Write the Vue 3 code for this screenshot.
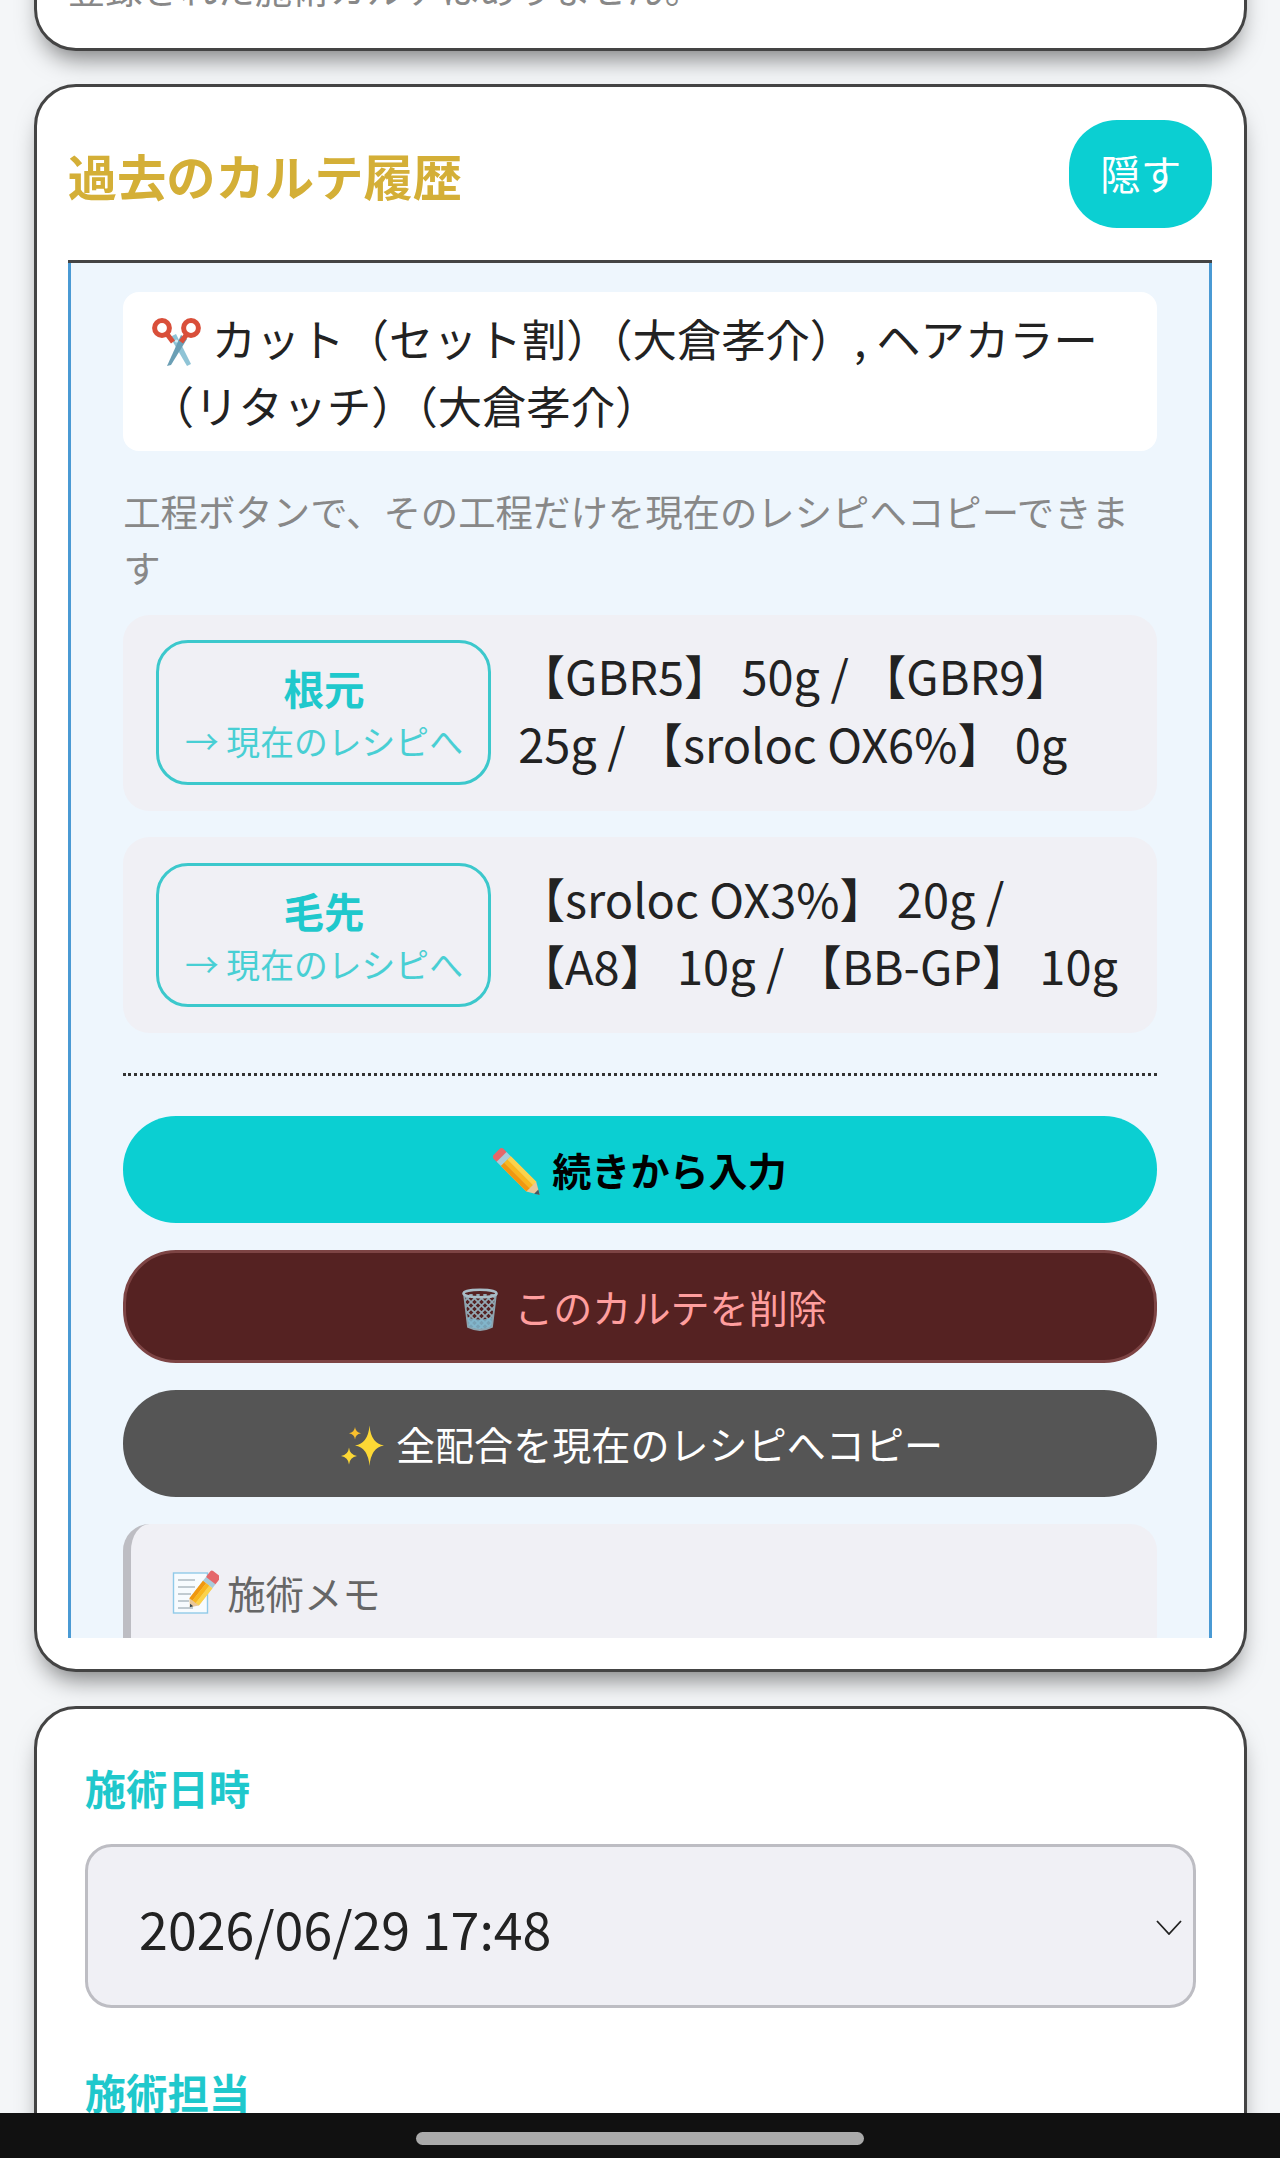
<script setup>
const rows = [
  { label: '根元', text: '【GBR5】 50g / 【GBR9】 25g / 【sroloc OX6%】 0g' },
  { label: '毛先', text: '【sroloc OX3%】 20g / 【A8】 10g / 【BB-GP】 10g' },
]
</script>

<template>
  <div class="screen">
    <main class="scroll">
      <section class="card card-empty">
        <p class="empty-text">登録された施術カルテはありません。</p>
      </section>

      <section class="card card-history">
        <header class="history-head">
          <h2 class="history-title">過去のカルテ履歴</h2>
          <button class="hide-btn">隠す</button>
        </header>

        <div class="history-list">
          <article class="entry">
            <div class="menu-box">
              <svg class="emoji emoji-menu" viewBox="10 10 52 52">
                <polygon points="30,31 36,28 51,58 47,60" fill="#8fc4d6" />
                <polygon points="41,29 47,33 31,59 27,60" fill="#6b9fb5" />
                <circle cx="36.500" cy="35" r="1.600" fill="#d5eef6" />
                <path d="M27 28 L33 36 M47 28 L41 36" stroke="#d94f3a" stroke-width="5" />
                <circle cx="22" cy="22" r="7.400" fill="none" stroke="#d94f3a" stroke-width="5" />
                <circle cx="51" cy="22" r="7.400" fill="none" stroke="#d94f3a" stroke-width="5" />
              </svg>
              カット（セット割）（大倉孝介）, ヘアカラー（リタッチ）（大倉孝介）
            </div>
            <p class="hint">工程ボタンで、その工程だけを現在のレシピへコピーできます</p>

            <div v-for="row in rows" :key="row.label" class="step-row">
              <button class="step-btn">
                <span class="step-name">{{ row.label }}</span>
                <span class="step-sub">→ 現在のレシピへ</span>
              </button>
              <div class="step-text">{{ row.text }}</div>
            </div>

            <div class="dotted"></div>

            <button class="action action-continue">
              <svg class="emoji" viewBox="8 2.700 52 52">
                <g transform="rotate(45 18 17)">
                  <rect x="9" y="10" width="10" height="14" rx="3" fill="#e5676a" />
                  <rect x="16" y="10" width="6" height="14" fill="#a9ccdb" />
                  <polygon points="22,10 58,10 70,17 58,24 22,24" fill="#e8c79a" />
                  <rect x="22" y="10" width="36" height="4.700" fill="#fbd34b" />
                  <rect x="22" y="14.700" width="36" height="4.600" fill="#f9b71e" />
                  <rect x="22" y="19.300" width="36" height="4.700" fill="#f0980f" />
                  <polygon points="65,14 70,17 65,20" fill="#455a64" />
                </g>
              </svg>
              <span class="action-label">続きから入力</span>
            </button>

            <button class="action action-delete">
              <svg class="emoji" viewBox="3 0 52 52">
                <defs>
                  <pattern id="mesh" width="7" height="7" patternUnits="userSpaceOnUse">
                    <path d="M0 0 L7 7 M7 0 L0 7" stroke="#93a9b4" stroke-width="1.700" />
                  </pattern>
                </defs>
                <path d="M14 13 L18 46 Q30 52 42 46 L46 13 Z" fill="url(#mesh)" />
                <path d="M16.500 36 Q30 41 43.500 36 L42 46 Q30 52 18 46 Z" fill="#7fb9d0" opacity=".85" />
                <path d="M14 13 L18 46 Q30 52 42 46 L46 13" fill="none" stroke="#8da3ae" stroke-width="1.800" />
                <ellipse cx="30" cy="12.500" rx="16.500" ry="3.800" fill="none" stroke="#a9bdc7" stroke-width="2.600" />
              </svg>
              <span class="action-label">このカルテを削除</span>
            </button>

            <button class="action action-copy">
              <svg class="emoji" viewBox="7 2 52 52">
                <path d="M39.500 9.500 Q41 27.500 54 29.500 Q41 31.500 39.500 50 Q38 31.500 25 29.500 Q38 27.500 39.500 9.500Z" fill="#fdd835" />
                <path d="M25 11 Q25.600 16.400 31 17.300 Q25.600 18 25 23.500 Q24.400 18 19 17.300 Q24.400 16.400 25 11Z" fill="#f9bf2d" />
                <path d="M19 31.500 Q19.800 39 27 40 Q19.800 41 19 48.500 Q18.200 41 11 40 Q18.200 39 19 31.500Z" fill="#fdd835" />
              </svg>
              <span class="action-label">全配合を現在のレシピへコピー</span>
            </button>

            <div class="memo">
              <svg class="emoji-memo" viewBox="6 4 48 48">
                <rect x="8.500" y="8" width="34" height="40" fill="#f7fbfe" stroke="#90cae9" stroke-width="1.400" />
                <path d="M13 15 H30 M13 22 H30 M13 29 H26 M13 36 H24 M13 43 H28" stroke="#8a9aa3" stroke-width="1" />
                <g transform="rotate(-52 47 14)">
                  <rect x="44" y="8" width="10" height="12" rx="2" fill="#e5676a" />
                  <rect x="40" y="8" width="5" height="12" fill="#a9ccdb" />
                  <polygon points="40,8 18,8 11,14 18,20 40,20" fill="#e8c79a" />
                  <rect x="18" y="8" width="22" height="4" fill="#f0980f" />
                  <rect x="18" y="12" width="22" height="4" fill="#f9b71e" />
                  <rect x="18" y="16" width="22" height="4" fill="#fbd34b" />
                  <polygon points="14,12 11,14 14,16" fill="#37474f" />
                </g>
              </svg>
              <span>施術メモ</span>
            </div>
          </article>
        </div>
      </section>

      <section class="card card-form">
        <label class="field-label">施術日時</label>
        <div class="select-wrap">
          <select class="select">
            <option>2026/06/29 17:48</option>
          </select>
          <svg class="chevron" viewBox="0 0 26 15">
            <path d="M1 1 L13 14 L25 1" fill="none" stroke="#222" stroke-width="1.800" />
          </svg>
        </div>
        <label class="field-label field-next">施術担当</label>
      </section>
    </main>

    <footer class="navbar"><span class="handle"></span></footer>
  </div>
</template>

<style scoped>
.screen {
  height: 2158px;
  display: flex;
  flex-direction: column;
  overflow: hidden;
  background: #f4f6f8;
  font-family: "Noto Sans CJK JP", "Noto Sans", sans-serif;
  color: #222;
}
.scroll {
  flex: 1;
  min-height: 0;
  overflow: hidden;
  padding: 0 33px 0 34px;
}
.card {
  box-sizing: border-box;
  background: #fff;
  border: 3px solid #444;
  border-radius: 42px;
  box-shadow: 0 15px 24px -8px rgba(0, 0, 0, 0.5);
}
.card-empty {
  margin-top: -75px;
  padding: 32px 30.700px;
}
.empty-text {
  margin: 0;
  font-size: 37.400px;
  line-height: 56px;
  color: #888;
}
.card-history {
  margin-top: 33px;
  height: 1587.700px;
  padding: 33px 31.700px 0 30.700px;
}
.history-head {
  display: flex;
  align-items: center;
  justify-content: space-between;
  height: 108px;
  margin-bottom: 32px;
}
.history-title {
  margin: 0;
  font-size: 49.300px;
  font-weight: 700;
  color: #d4af37;
}
.hide-btn {
  width: 143px;
  height: 108px;
  border: 0;
  border-radius: 48px;
  background: #0bcfd2;
  color: #fff;
  font-family: inherit;
  font-size: 40.500px;
  padding: 0 0 3px;
}
.history-list {
  box-sizing: border-box;
  height: 1378px;
  overflow: hidden;
  border-top: 3px solid #444;
}
.entry {
  border-left: 3px solid #4a9ad4;
  border-right: 3px solid #4a9ad4;
  background: #eef6fd;
  padding: 29px 52.500px 40px;
}
.menu-box {
  background: #fff;
  border-radius: 16px;
  padding: 13px 26.670px;
  font-size: 44.300px;
  line-height: 66.500px;
}
.emoji {
  flex: none;
  width: 52px;
  height: 52px;
}
.emoji-menu {
  display: inline-block;
  vertical-align: -11px;
}
.hint {
  margin: 32px 0 19.700px;
  font-size: 37.400px;
  line-height: 56px;
  color: #888;
}
.step-row {
  display: flex;
  align-items: center;
  gap: 26.670px;
  height: 196px;
  box-sizing: border-box;
  padding: 0 32px 0 33.300px;
  margin-bottom: 26.500px;
  background: #f0f0f5;
  border-radius: 26.670px;
}
.step-btn {
  flex: none;
  box-sizing: border-box;
  width: 335px;
  height: 144.500px;
  display: flex;
  flex-direction: column;
  align-items: center;
  justify-content: center;
  padding: 1px 0 0;
  border: 3px solid #3cc8cc;
  border-radius: 32px;
  background: transparent;
  font-family: inherit;
}
.step-name {
  font-size: 40.600px;
  line-height: 56px;
  font-weight: 700;
  color: #1fc8cc;
}
.step-sub {
  font-size: 33.800px;
  line-height: 50px;
  color: #1fc8cc;
  opacity: 0.8;
  white-space: nowrap;
}
.step-text {
  flex: 1;
  min-width: 0;
  padding-bottom: 5.500px;
  font-size: 46.930px;
  line-height: 67.500px;
}
.dotted {
  margin: 39.600px 0 40px;
  border-top: 3px dotted #333;
}
.action {
  display: flex;
  align-items: center;
  justify-content: center;
  gap: 7px;
  box-sizing: border-box;
  width: 100%;
  height: 107.500px;
  margin-bottom: 26.600px;
  border: 0;
  border-radius: 53px;
  font-family: inherit;
  font-size: 39.100px;
  padding: 0;
}
.action-label {
  padding-bottom: 2px;
}
.action-continue {
  background: #0bcfd2;
  color: #000;
  font-weight: 700;
}
.action-delete {
  height: 113.500px;
  gap: 9px;
  background: #552222;
  border: 3px solid #7d4444;
  color: #ff9e9e;
}
.action-copy {
  background: #555;
  color: #fff;
}
.memo {
  display: flex;
  align-items: flex-start;
  gap: 8px;
  box-sizing: border-box;
  border-left: 8px solid #bdbdc3;
  border-radius: 26.670px;
  background: #f0f0f5;
  padding: 38px 40px;
  height: 300px;
  font-size: 38.400px;
  line-height: 60px;
  color: #666;
}
.emoji-memo {
  flex: none;
  width: 48px;
  height: 48px;
  margin-top: 7px;
}
.card-form {
  margin-top: 34px;
  height: 600px;
  padding: 46.300px 48px 0 47.700px;
}
.field-label {
  display: block;
  font-size: 41.400px;
  line-height: 64px;
  font-weight: 700;
  color: #1fc8cc;
}
.field-next {
  margin-top: 51.500px;
}
.select-wrap {
  position: relative;
  margin-top: 24.700px;
}
.select {
  display: block;
  box-sizing: border-box;
  width: 100%;
  height: 164px;
  appearance: none;
  -webkit-appearance: none;
  border: 3px solid #bdbdc3;
  border-radius: 26.670px;
  background: #f0f0f5;
  padding: 3px 50.600px 0 51.400px;
  font-family: inherit;
  font-size: 51.900px;
  color: #222;
}
.chevron {
  position: absolute;
  right: 14px;
  top: 76px;
  width: 26px;
  height: 15px;
}
.navbar {
  flex: none;
  height: 45px;
  display: flex;
  justify-content: center;
  align-items: flex-start;
  background: #111;
}
.handle {
  width: 448px;
  height: 13px;
  margin-top: 19px;
  border-radius: 7px;
  background: #aaa;
}
</style>

<style>
html, body {
  margin: 0;
  padding: 0;
}
</style>
